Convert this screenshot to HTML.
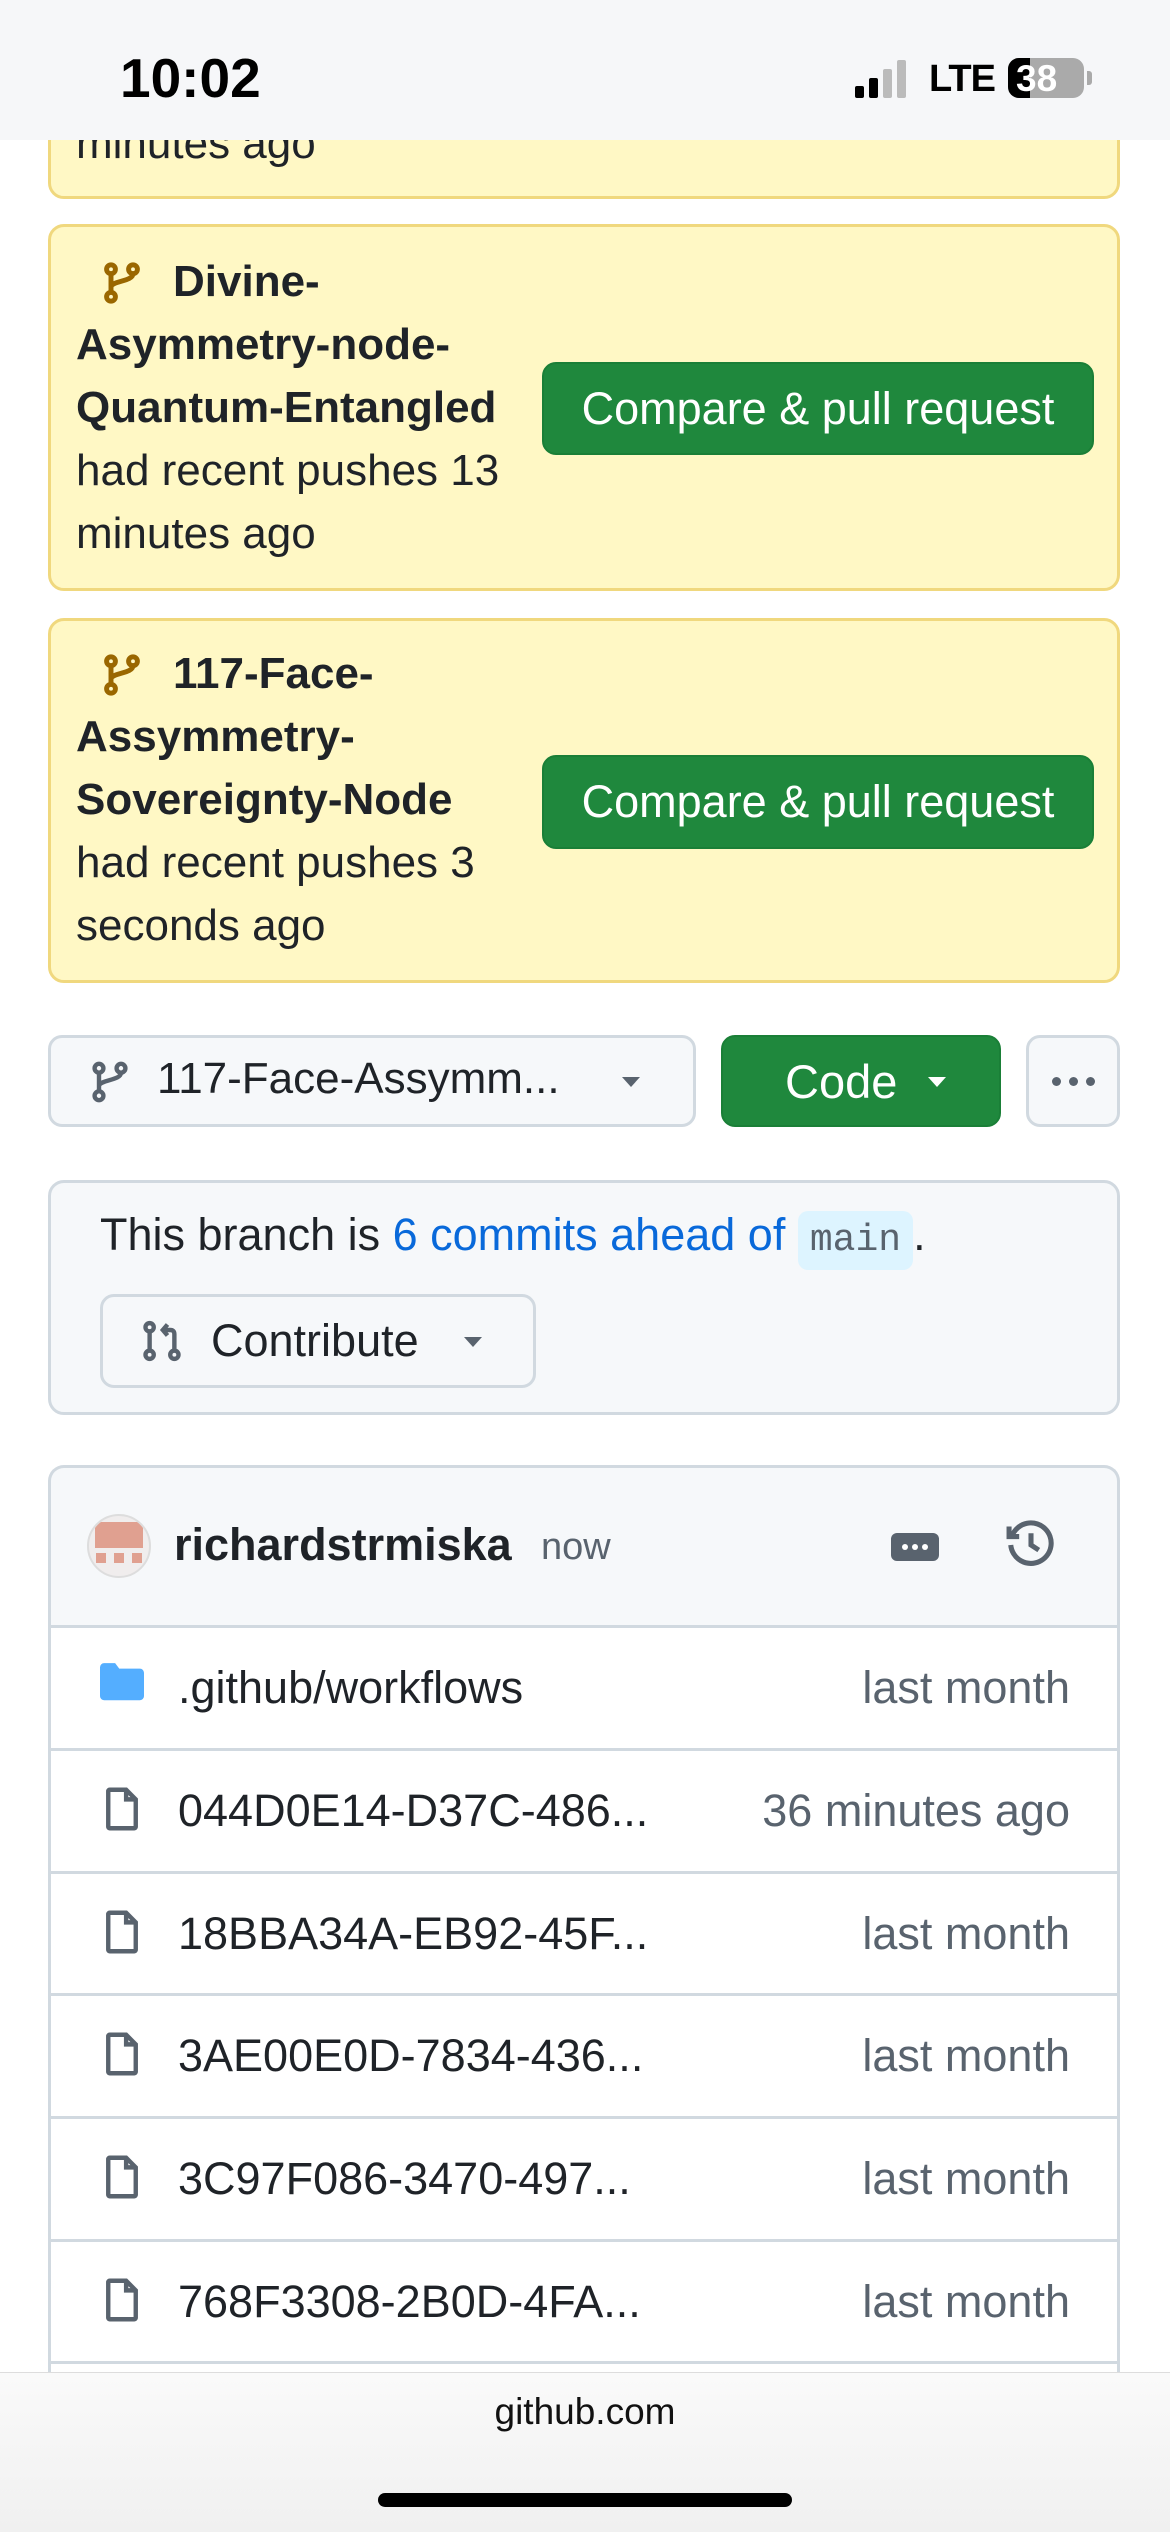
<!DOCTYPE html>
<html><head><meta charset="utf-8"><style>
*{box-sizing:border-box;margin:0;padding:0}
html,body{width:1170px;height:2532px;overflow:hidden}
body{background:#fff;font-family:"Liberation Sans",sans-serif;color:#1f2328;position:relative}
.abs{position:absolute}
.status{left:0;top:0;width:1170px;height:140px;background:#f6f7f9;z-index:5}
.card{left:48px;width:1072px;background:#fff8c5;border:3px solid #f0d87e;border-radius:16px}
.ctext{left:76px;font-size:44px;line-height:63px;width:480px;white-space:nowrap}
.btn{background:#1f883d;color:#fff;border-radius:14px;font-size:45px;display:flex;align-items:center;justify-content:center;border:2px solid #1a7f37}
.gbtn{background:#f6f8fa;border:3px solid #d1d9e0;border-radius:14px}
.row{left:48px;width:1072px;height:123px;border-top:3px solid #d1d9e0;border-left:3px solid #d1d9e0;border-right:3px solid #d1d9e0;font-size:45px}
.row .n{position:absolute;left:127px;top:34px}
.row .t{position:absolute;right:47px;top:34px;color:#59636e}
.row svg{position:absolute;left:49px;top:33px}
</style></head><body>
<div class="abs status">
<div class="abs" style="left:120px;top:46px;font-size:55px;font-weight:bold;color:#000">10:02</div>
<div class="abs" style="left:855px;top:86px;width:9px;height:12px;background:#000;border-radius:2px"></div>
<div class="abs" style="left:869px;top:78px;width:9px;height:20px;background:#000;border-radius:2px"></div>
<div class="abs" style="left:883px;top:69px;width:9px;height:29px;background:#bbb;border-radius:2px"></div>
<div class="abs" style="left:897px;top:60px;width:9px;height:38px;background:#bbb;border-radius:2px"></div>
<div class="abs" style="left:929px;top:58px;font-size:38px;font-weight:bold;color:#000;letter-spacing:-1px">LTE</div>
<div class="abs" style="left:1008px;top:58px;width:76px;height:40px;background:#aaa;border-radius:11px;overflow:hidden"><div style="width:22px;height:40px;background:#000"></div></div>
<div class="abs" style="left:1016px;top:58px;font-size:37px;font-weight:bold;color:#fff">38</div>
<div class="abs" style="left:1087px;top:71px;width:5px;height:14px;background:#aaa;border-radius:0 3px 3px 0"></div>
</div>

<div class="abs card" style="top:60px;height:139px"></div>
<div class="abs ctext" style="top:112px">minutes ago</div>

<div class="abs card" style="top:224px;height:367px"></div>
<svg class="abs" style="left:100px;top:258px" width="44" height="50" viewBox="0 0 16 16" fill="none" stroke="#9a6700" stroke-width="1.8"><circle cx="4" cy="3" r="1.6"/><circle cx="4" cy="13" r="1.6"/><circle cx="12" cy="3" r="1.6"/><path d="M4 4.6v6.8M12 4.6c0 3-8 2.5-8 5"/></svg>
<div class="abs ctext" style="top:250px;font-weight:bold;text-indent:97px">Divine-<br>Asymmetry-node-<br>Quantum-Entangled</div>
<div class="abs ctext" style="top:439px">had recent pushes 13<br>minutes ago</div>
<div class="abs btn" style="left:542px;top:362px;width:552px;height:93px">Compare &amp; pull request</div>

<div class="abs card" style="top:618px;height:365px"></div>
<svg class="abs" style="left:100px;top:650px" width="44" height="50" viewBox="0 0 16 16" fill="none" stroke="#9a6700" stroke-width="1.8"><circle cx="4" cy="3" r="1.6"/><circle cx="4" cy="13" r="1.6"/><circle cx="12" cy="3" r="1.6"/><path d="M4 4.6v6.8M12 4.6c0 3-8 2.5-8 5"/></svg>
<div class="abs ctext" style="top:642px;font-weight:bold;text-indent:97px">117-Face-<br>Assymmetry-<br>Sovereignty-Node</div>
<div class="abs ctext" style="top:831px">had recent pushes 3<br>seconds ago</div>
<div class="abs btn" style="left:542px;top:755px;width:552px;height:94px">Compare &amp; pull request</div>

<div class="abs gbtn" style="left:48px;top:1035px;width:648px;height:92px"></div>
<svg class="abs" style="left:88px;top:1058px" width="44" height="48" viewBox="0 0 16 16" fill="none" stroke="#59636e" stroke-width="1.6"><circle cx="4" cy="3" r="1.6"/><circle cx="4" cy="13" r="1.6"/><circle cx="12" cy="3" r="1.6"/><path d="M4 4.6v6.8M12 4.6c0 3-8 2.5-8 5"/></svg>
<div class="abs" style="left:157px;top:1054px;font-size:44px">117-Face-Assymm...</div>
<div class="abs" style="left:622px;top:1077px;border:9px solid transparent;border-top:10px solid #59636e"></div>
<div class="abs btn" style="left:721px;top:1035px;width:280px;height:92px;justify-content:flex-start;padding-left:62px;font-size:47px">Code</div>
<div class="abs" style="left:928px;top:1077px;border:9px solid transparent;border-top:10px solid #fff"></div>
<div class="abs gbtn" style="left:1026px;top:1035px;width:94px;height:92px;display:flex;align-items:center;justify-content:center;gap:8px">
<i style="width:9px;height:9px;border-radius:50%;background:#59636e"></i><i style="width:9px;height:9px;border-radius:50%;background:#59636e"></i><i style="width:9px;height:9px;border-radius:50%;background:#59636e"></i></div>

<div class="abs" style="left:48px;top:1180px;width:1072px;height:235px;background:#f6f8fa;border:3px solid #d1d9e0;border-radius:16px"></div>
<div class="abs" style="left:100px;top:1209px;font-size:45px;white-space:nowrap">This branch is <span style="color:#0969da">6 commits ahead of</span> <span style="font-family:'Liberation Mono',monospace;font-size:38px;background:#ddf4ff;color:#59636e;padding:8px 12px;border-radius:10px">main</span>.</div>
<div class="abs gbtn" style="left:100px;top:1294px;width:436px;height:94px"></div>
<svg class="abs" style="left:140px;top:1318px" width="44" height="46" viewBox="0 0 16 16" fill="none" stroke="#59636e" stroke-width="1.6"><circle cx="3.5" cy="3" r="1.5"/><circle cx="3.5" cy="13" r="1.5"/><circle cx="12.5" cy="13" r="1.5"/><path d="M3.5 4.5v7M12.5 11.5V5.5c0-1-.5-1.5-1.5-1.5H8.5M10 2L8.3 4 10 6"/></svg>
<div class="abs" style="left:211px;top:1315px;font-size:45px">Contribute</div>
<div class="abs" style="left:464px;top:1337px;border:9px solid transparent;border-top:10px solid #59636e"></div>

<div class="abs" style="left:48px;top:1465px;width:1072px;height:160px;border:3px solid #d1d9e0;border-bottom:none;border-radius:16px 16px 0 0;background:#f6f8fa"></div>
<div class="abs" style="left:87px;top:1514px;width:64px;height:64px;border-radius:50%;background:#f0eded;border:2px solid #ddd;overflow:hidden">
<div class="abs" style="left:6px;top:6px;width:48px;height:26px;background:#e0a090;border-radius:6px 6px 0 0"></div>
<div class="abs" style="left:7px;top:37px;width:10px;height:10px;background:#e0a090"></div>
<div class="abs" style="left:25px;top:37px;width:10px;height:10px;background:#e0a090"></div>
<div class="abs" style="left:43px;top:37px;width:10px;height:10px;background:#e0a090"></div>
</div>
<div class="abs" style="left:174px;top:1519px;font-size:45px;font-weight:bold">richardstrmiska</div>
<div class="abs" style="left:541px;top:1526px;font-size:38px;color:#59636e">now</div>
<div class="abs" style="left:891px;top:1533px;width:48px;height:28px;background:#59636e;border-radius:6px;display:flex;align-items:center;justify-content:center;gap:4px">
<i style="width:6px;height:6px;border-radius:50%;background:#fff"></i><i style="width:6px;height:6px;border-radius:50%;background:#fff"></i><i style="width:6px;height:6px;border-radius:50%;background:#fff"></i></div>
<svg class="abs" style="left:1004px;top:1518px" width="54" height="54" viewBox="0 0 16 16" fill="none" stroke="#59636e" stroke-width="1.5"><path d="M2.5 5A6 6 0 1 1 2 8"/><path d="M1.5 2.5V5.5h3"/><path d="M8 4.5V8l2.3 1.5"/></svg>

<div class="abs row" style="top:1625px"><svg width="44" height="40" viewBox="0 0 16 14"><path d="M0 2a1.5 1.5 0 0 1 1.5-1.5h4l1.5 2h7.5A1.5 1.5 0 0 1 16 4v8.5a1.5 1.5 0 0 1-1.5 1.5h-13A1.5 1.5 0 0 1 0 12.5z" fill="#54aeff"/></svg><span class="n">.github/workflows</span><span class="t">last month</span></div>
<div class="abs row" style="top:1748px"><svg width="44" height="50" viewBox="0 0 16 16" fill="none" stroke="#59636e" stroke-width="1.6"><path d="M3.5 1h6l3.5 3.5v10a.5.5 0 0 1-.5.5h-9a.5.5 0 0 1-.5-.5v-13a.5.5 0 0 1 .5-.5zM9.5 1v3.5H13"/></svg><span class="n">044D0E14-D37C-486...</span><span class="t">36 minutes ago</span></div>
<div class="abs row" style="top:1871px"><svg width="44" height="50" viewBox="0 0 16 16" fill="none" stroke="#59636e" stroke-width="1.6"><path d="M3.5 1h6l3.5 3.5v10a.5.5 0 0 1-.5.5h-9a.5.5 0 0 1-.5-.5v-13a.5.5 0 0 1 .5-.5zM9.5 1v3.5H13"/></svg><span class="n">18BBA34A-EB92-45F...</span><span class="t">last month</span></div>
<div class="abs row" style="top:1993px"><svg width="44" height="50" viewBox="0 0 16 16" fill="none" stroke="#59636e" stroke-width="1.6"><path d="M3.5 1h6l3.5 3.5v10a.5.5 0 0 1-.5.5h-9a.5.5 0 0 1-.5-.5v-13a.5.5 0 0 1 .5-.5zM9.5 1v3.5H13"/></svg><span class="n">3AE00E0D-7834-436...</span><span class="t">last month</span></div>
<div class="abs row" style="top:2116px"><svg width="44" height="50" viewBox="0 0 16 16" fill="none" stroke="#59636e" stroke-width="1.6"><path d="M3.5 1h6l3.5 3.5v10a.5.5 0 0 1-.5.5h-9a.5.5 0 0 1-.5-.5v-13a.5.5 0 0 1 .5-.5zM9.5 1v3.5H13"/></svg><span class="n">3C97F086-3470-497...</span><span class="t">last month</span></div>
<div class="abs row" style="top:2239px"><svg width="44" height="50" viewBox="0 0 16 16" fill="none" stroke="#59636e" stroke-width="1.6"><path d="M3.5 1h6l3.5 3.5v10a.5.5 0 0 1-.5.5h-9a.5.5 0 0 1-.5-.5v-13a.5.5 0 0 1 .5-.5zM9.5 1v3.5H13"/></svg><span class="n">768F3308-2B0D-4FA...</span><span class="t">last month</span></div>
<div class="abs row" style="top:2361px;height:11px"></div>

<div class="abs" style="left:0;top:2372px;width:1170px;height:160px;background:linear-gradient(#fafafa,#f0f0f0);border-top:1px solid #ddd;z-index:5">
<div style="text-align:center;margin-top:18px;font-size:37px;color:#111">github.com</div>
<div class="abs" style="left:378px;top:120px;width:414px;height:14px;background:#000;border-radius:7px"></div>
</div>
</body></html>
